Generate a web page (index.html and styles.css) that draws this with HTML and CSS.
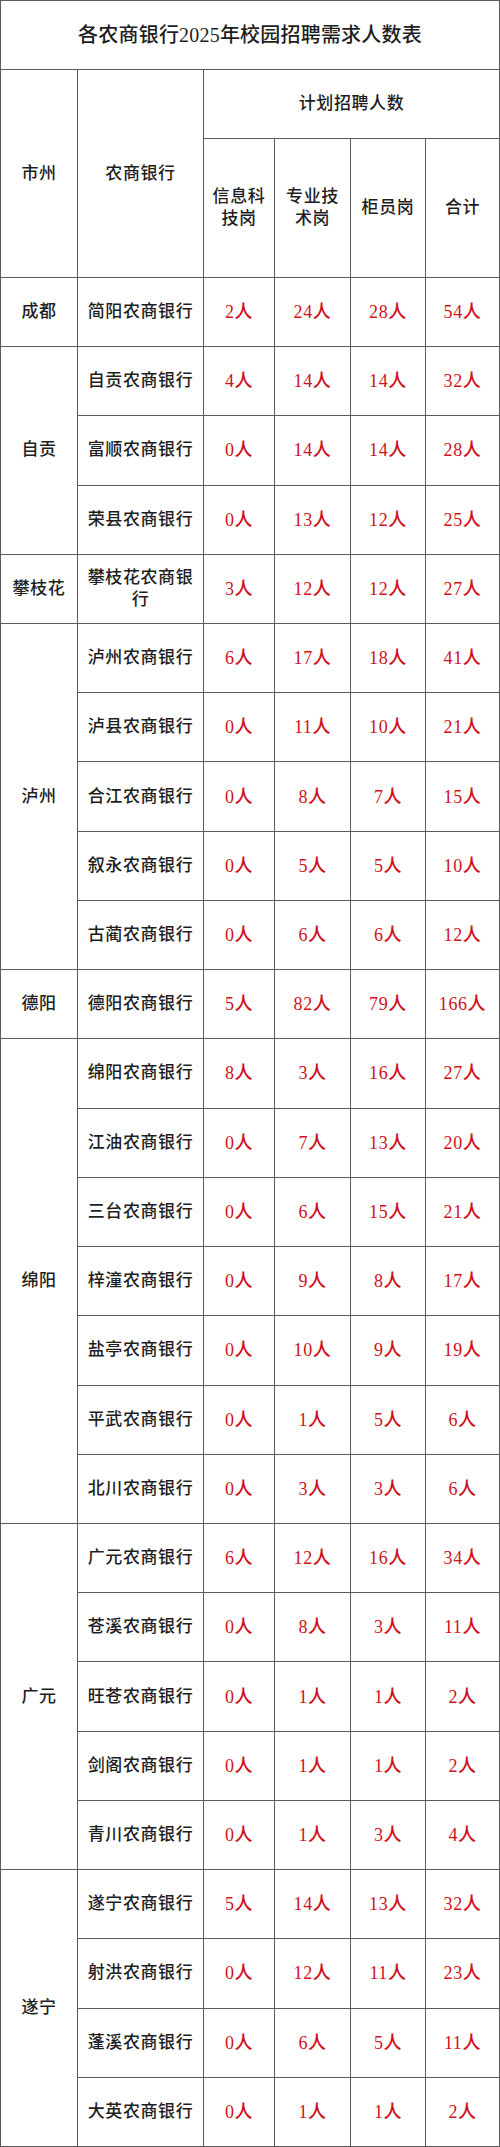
FILE: index.html
```html
<!DOCTYPE html>
<html lang="zh-CN">
<head>
<meta charset="utf-8">
<title>各农商银行2025年校园招聘需求人数表</title>
<link rel="stylesheet" href="styles.css">
</head>
<body>
<div class="sheet">
  <div class="cell title">各农商银行2025年校园招聘需求人数表</div>
  <div class="cell span3">市州</div>
  <div class="cell span3">农商银行</div>
  <div class="cell plan">计划招聘人数</div>
  <div class="cell span2"><span class="wrap3">信息科技岗</span></div>
  <div class="cell span2"><span class="wrap3">专业技术岗</span></div>
  <div class="cell span2">柜员岗</div>
  <div class="cell span2">合计</div>

  <div class="cell">成都</div>
  <div class="cell bank"><span>简阳农商银行</span></div><div class="cell num">2人</div><div class="cell num">24人</div><div class="cell num">28人</div><div class="cell num">54人</div>

  <div class="cell r3">自贡</div>
  <div class="cell bank"><span>自贡农商银行</span></div><div class="cell num">4人</div><div class="cell num">14人</div><div class="cell num">14人</div><div class="cell num">32人</div>
  <div class="cell bank"><span>富顺农商银行</span></div><div class="cell num">0人</div><div class="cell num">14人</div><div class="cell num">14人</div><div class="cell num">28人</div>
  <div class="cell bank"><span>荣县农商银行</span></div><div class="cell num">0人</div><div class="cell num">13人</div><div class="cell num">12人</div><div class="cell num">25人</div>

  <div class="cell">攀枝花</div>
  <div class="cell bank"><span>攀枝花农商银<br>行</span></div><div class="cell num">3人</div><div class="cell num">12人</div><div class="cell num">12人</div><div class="cell num">27人</div>

  <div class="cell r5">泸州</div>
  <div class="cell bank"><span>泸州农商银行</span></div><div class="cell num">6人</div><div class="cell num">17人</div><div class="cell num">18人</div><div class="cell num">41人</div>
  <div class="cell bank"><span>泸县农商银行</span></div><div class="cell num">0人</div><div class="cell num">11人</div><div class="cell num">10人</div><div class="cell num">21人</div>
  <div class="cell bank"><span>合江农商银行</span></div><div class="cell num">0人</div><div class="cell num">8人</div><div class="cell num">7人</div><div class="cell num">15人</div>
  <div class="cell bank"><span>叙永农商银行</span></div><div class="cell num">0人</div><div class="cell num">5人</div><div class="cell num">5人</div><div class="cell num">10人</div>
  <div class="cell bank"><span>古蔺农商银行</span></div><div class="cell num">0人</div><div class="cell num">6人</div><div class="cell num">6人</div><div class="cell num">12人</div>

  <div class="cell">德阳</div>
  <div class="cell bank"><span>德阳农商银行</span></div><div class="cell num">5人</div><div class="cell num">82人</div><div class="cell num">79人</div><div class="cell num">166人</div>

  <div class="cell r7">绵阳</div>
  <div class="cell bank"><span>绵阳农商银行</span></div><div class="cell num">8人</div><div class="cell num">3人</div><div class="cell num">16人</div><div class="cell num">27人</div>
  <div class="cell bank"><span>江油农商银行</span></div><div class="cell num">0人</div><div class="cell num">7人</div><div class="cell num">13人</div><div class="cell num">20人</div>
  <div class="cell bank"><span>三台农商银行</span></div><div class="cell num">0人</div><div class="cell num">6人</div><div class="cell num">15人</div><div class="cell num">21人</div>
  <div class="cell bank"><span>梓潼农商银行</span></div><div class="cell num">0人</div><div class="cell num">9人</div><div class="cell num">8人</div><div class="cell num">17人</div>
  <div class="cell bank"><span>盐亭农商银行</span></div><div class="cell num">0人</div><div class="cell num">10人</div><div class="cell num">9人</div><div class="cell num">19人</div>
  <div class="cell bank"><span>平武农商银行</span></div><div class="cell num">0人</div><div class="cell num">1人</div><div class="cell num">5人</div><div class="cell num">6人</div>
  <div class="cell bank"><span>北川农商银行</span></div><div class="cell num">0人</div><div class="cell num">3人</div><div class="cell num">3人</div><div class="cell num">6人</div>

  <div class="cell r5">广元</div>
  <div class="cell bank"><span>广元农商银行</span></div><div class="cell num">6人</div><div class="cell num">12人</div><div class="cell num">16人</div><div class="cell num">34人</div>
  <div class="cell bank"><span>苍溪农商银行</span></div><div class="cell num">0人</div><div class="cell num">8人</div><div class="cell num">3人</div><div class="cell num">11人</div>
  <div class="cell bank"><span>旺苍农商银行</span></div><div class="cell num">0人</div><div class="cell num">1人</div><div class="cell num">1人</div><div class="cell num">2人</div>
  <div class="cell bank"><span>剑阁农商银行</span></div><div class="cell num">0人</div><div class="cell num">1人</div><div class="cell num">1人</div><div class="cell num">2人</div>
  <div class="cell bank"><span>青川农商银行</span></div><div class="cell num">0人</div><div class="cell num">1人</div><div class="cell num">3人</div><div class="cell num">4人</div>

  <div class="cell r4">遂宁</div>
  <div class="cell bank"><span>遂宁农商银行</span></div><div class="cell num">5人</div><div class="cell num">14人</div><div class="cell num">13人</div><div class="cell num">32人</div>
  <div class="cell bank"><span>射洪农商银行</span></div><div class="cell num">0人</div><div class="cell num">12人</div><div class="cell num">11人</div><div class="cell num">23人</div>
  <div class="cell bank"><span>蓬溪农商银行</span></div><div class="cell num">0人</div><div class="cell num">6人</div><div class="cell num">5人</div><div class="cell num">11人</div>
  <div class="cell bank"><span>大英农商银行</span></div><div class="cell num">0人</div><div class="cell num">1人</div><div class="cell num">1人</div><div class="cell num">2人</div>
</div>
</body>
</html>
```

FILE: styles.css
```css
html, body {
  margin: 0;
  padding: 0;
  background: #fff;
}

.sheet {
  box-sizing: border-box;
  width: 500px;
  height: 2147px;
  display: grid;
  grid-template-columns: 77px 126px 71px 76px 75px 1fr;
  grid-template-rows: repeat(31, 1fr);
  border-left: 1.5px solid #5a5a5a;
  border-top: 1.5px solid #5a5a5a;
  font-family: "Liberation Serif", "Noto Sans CJK SC", serif;
  font-size: 17px;
  font-weight: 500;
  color: #1e1e1e;
}

.cell {
  box-sizing: border-box;
  border-right: 1.5px solid #5a5a5a;
  border-bottom: 1.5px solid #5a5a5a;
  display: flex;
  align-items: center;
  justify-content: center;
  text-align: center;
  padding: 0 4px;
  line-height: 22px;
  letter-spacing: 0.6px;
  min-width: 0;
  min-height: 0;
}

.title {
  grid-column: 1 / -1;
  font-size: 20px;
  letter-spacing: 0.2px;
}

.span3 { grid-row: span 3; }
.span2 { grid-row: span 2; }
.plan { grid-column: span 4; }

.wrap3 {
  display: block;
  max-width: 3.3em;
}

.r3 { grid-row: span 3; }
.r4 { grid-row: span 4; }
.r5 { grid-row: span 5; }
.r7 { grid-row: span 7; }

.bank span {
  display: block;
  max-width: 6.6em;
}

.num {
  color: #cf1220;
  font-size: 18px;
}
```
